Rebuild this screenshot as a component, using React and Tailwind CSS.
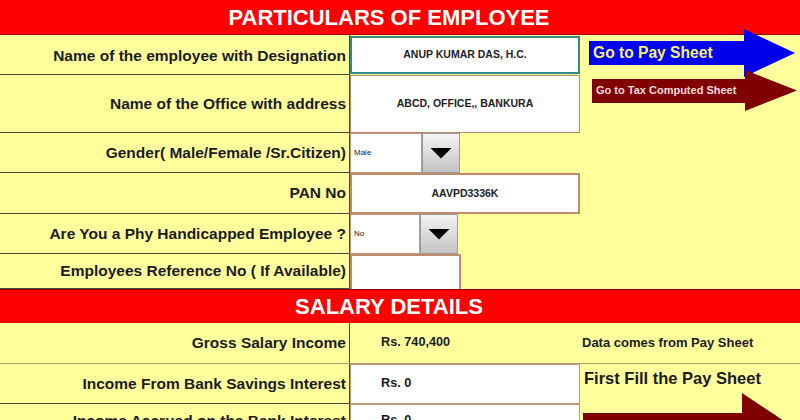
import React from 'react';

const FONT = "font-['Liberation_Sans',Arial,sans-serif]";

function Label({ children, h }) {
  return (
    <div
      className={`w-[350px] shrink-0 border-r border-b border-[#4a4a3a] flex items-center justify-end pr-[3px] text-[15.5px] font-bold text-[#1c1c1c] ${h}`}
    >
      {children}
    </div>
  );
}

function Dropdown({ value, w }) {
  return (
    <div className="flex h-full">
      <div className={`${w} h-full bg-white border border-[#c9957a] flex items-center pl-[3px] text-[8px] text-[#222]`}>
        {value}
      </div>
      <div className="w-[38px] h-full border border-[#9a9a9a] bg-gradient-to-b from-[#f4f4f4] to-[#c4c4c4] flex items-center justify-center">
        <div className="w-[22px] h-[11px] bg-black [clip-path:polygon(0_0,100%_0,50%_100%)]" />
      </div>
    </div>
  );
}

function Arrow({ body, bodyW, bodyH, headW, headH, children, textCls }) {
  return (
    <div className="flex items-center">
      <div className={`${body} ${bodyW} ${bodyH} flex items-center pl-[4px] whitespace-nowrap ${textCls}`}>
        {children}
      </div>
      <div className={`${body} ${headW} ${headH} -ml-[6px] [clip-path:polygon(0_0,100%_50%,0_100%)]`} />
    </div>
  );
}

export default function App() {
  return (
    <div className={`w-[800px] h-[420px] overflow-hidden bg-[#ffff9c] relative ${FONT}`}>
      {/* header */}
      <div className="h-[35px] bg-[#ff0000] flex items-center justify-center pr-[22px] text-white text-[22px] font-bold border-b border-[#a00000]">
        PARTICULARS OF EMPLOYEE
      </div>

      {/* employee rows */}
      <div className="flex">
        <Label h="h-[40px] pt-[3px]">Name of the employee with Designation</Label>
        <div className="w-[230px] h-[40px] py-[1px]">
          <div className="h-full bg-white border-2 border-[#338a8a] flex items-center justify-center text-[10.5px] font-bold text-[#222]">
            ANUP KUMAR DAS, H.C.
          </div>
        </div>
      </div>
      <div className="flex">
        <Label h="h-[58px]">Name of the Office with address</Label>
        <div className="w-[230px] h-[58px]">
          <div className="h-full bg-white border border-[#b8866a] flex items-center justify-center text-[10.5px] font-bold text-[#222]">
            ABCD, OFFICE,, BANKURA
          </div>
        </div>
      </div>
      <div className="flex">
        <Label h="h-[40px]">Gender( Male/Female /Sr.Citizen)</Label>
        <div className="h-[40px]">
          <Dropdown value="Male" w="w-[72px]" />
        </div>
      </div>
      <div className="flex">
        <Label h="h-[41px]">PAN No</Label>
        <div className="w-[230px] h-[41px]">
          <div className="h-full bg-white border-2 border-[#c08a6c] flex items-center justify-center text-[10.5px] font-bold text-[#222]">
            AAVPD3336K
          </div>
        </div>
      </div>
      <div className="flex">
        <Label h="h-[40px]">Are You a Phy Handicapped Employee ?</Label>
        <div className="h-[40px]">
          <Dropdown value="No" w="w-[70px]" />
        </div>
      </div>
      <div className="flex">
        <Label h="h-[35px]">Employees Reference No ( If Available)</Label>
        <div className="w-[111px] h-[35px] bg-white border-2 border-b-0 border-[#c08a6c]" />
      </div>

      {/* salary header */}
      <div className="h-[34px] bg-[#ff0000] flex items-center justify-center pr-[22px] text-white text-[22px] font-bold border-t border-[#8a0000]">
        SALARY DETAILS
      </div>

      <div className="flex border-b border-[#b89a70]">
        <Label h="h-[40px] border-b-0">Gross Salary Income</Label>
        <div className="w-[230px] h-[40px] flex items-center pl-[31px] text-[12.7px] font-bold text-[#1c1c1c]">
          Rs. 740,400
        </div>
        <div className="h-[40px] flex items-center pl-[2px] text-[13px] font-bold text-[#1c1c1c]">
          Data comes from Pay Sheet
        </div>
      </div>
      <div className="flex">
        <Label h="h-[40px]">Income From Bank Savings Interest</Label>
        <div className="w-[230px] h-[40px] bg-white border border-[#c9957a] flex items-center pl-[30px] text-[12.7px] font-bold text-[#1c1c1c]">
          Rs. 0
        </div>
      </div>
      <div className="flex">
        <Label h="h-[40px] items-start pt-[5px]">Income Accrued on the Bank Interest</Label>
        <div className="w-[230px] h-[40px] bg-white border border-[#c9957a] flex items-start pt-[6px] pl-[30px] text-[12.7px] font-bold text-[#1c1c1c]">
          Rs. 0
        </div>
      </div>

      {/* floating shapes */}
      <div className="absolute left-[589px] top-[29px]">
        <Arrow
          body="bg-[#0000ee]"
          bodyW="w-[161px]"
          bodyH="h-[24px]"
          headW="w-[51px]"
          headH="h-[48px]"
          textCls="text-[15.6px] font-bold text-[#f2f07a]"
        >
          Go to Pay Sheet
        </Arrow>
      </div>
      <div className="absolute left-[592px] top-[70px]">
        <Arrow
          body="bg-[#800000]"
          bodyW="w-[159px]"
          bodyH="h-[24px]"
          headW="w-[52px]"
          headH="h-[41px]"
          textCls="text-[11px] font-bold text-[#f4dcdc] pl-[3px]"
        >
          Go to Tax Computed Sheet
        </Arrow>
      </div>
      <div className="absolute left-[584px] top-[366px] text-[16.5px] font-bold text-[#1c1c1c]">
        First Fill the Pay Sheet
      </div>
      <div className="absolute left-[583px] top-[393px]">
        <Arrow
          body="bg-[#800000]"
          bodyW="w-[165px]"
          bodyH="h-[40px]"
          headW="w-[60px]"
          headH="h-[80px]"
          textCls=""
        />
      </div>
    </div>
  );
}
